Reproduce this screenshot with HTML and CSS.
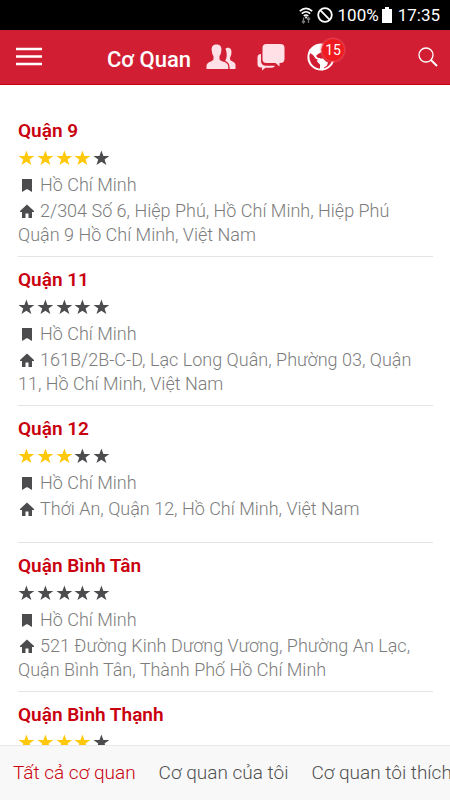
FILE: index.html
```html
<!DOCTYPE html>
<html lang="vi">
<head>
<meta charset="utf-8">
<meta name="viewport" content="width=device-width, initial-scale=1">
<title>Cơ Quan</title>
<link rel="stylesheet" href="styles.css">
</head>
<body>
<svg class="sprite" aria-hidden="true">
  <symbol id="star" viewBox="0 0 19 18"><path d="M9.500 1.500L11.500 7H17.500L12.700 10.500L14.500 16.200L9.500 12.700L4.500 16.200L6.300 10.500L1.500 7H7.500Z"/></symbol>
  <symbol id="bookmark" viewBox="0 0 18 18"><path d="M4 3h10v13l-5-3-5 3z"/></symbol>
  <symbol id="home" viewBox="0 0 18 18"><path d="M9 2.500L16 9v1h-2v6h-3.500v-4.500h-3V16H4v-6H2V9z"/></symbol>
</svg>
<div class="status">
  <svg class="wifi" viewBox="0 0 14 18" aria-hidden="true"><g fill="none" stroke="#fff" stroke-width="1.600"><path d="M.8 5.200Q7-.6 13.200 5.200M2.800 7.700Q7 3.800 11.200 7.700M4.800 10Q7 8 9.200 10"/></g><path d="M7 13L5.500 10.500h3z" fill="#fff"/><path d="M4.500 11.500v5M3 15l1.500 2L6 15M9.500 17v-5M8 13.500l1.500-2 1.500 2" fill="none" stroke="#777" stroke-width="1.300"/></svg>
  <svg class="block" viewBox="0 0 16 16" aria-hidden="true"><g fill="none" stroke="#fff" stroke-width="1.800"><circle cx="8" cy="8" r="6.800"/><path d="M3.200 3.200l9.600 9.600"/></g></svg>
  <span class="percent">100%</span>
  <svg class="battery" viewBox="0 0 10 16" aria-hidden="true"><path d="M3 0h4v2h3v14H0V2h3z" fill="#fff"/></svg>
  <span>17:35</span>
</div>
<header class="bar">
  <button class="icon-button menu" aria-label="Menu"><svg viewBox="0 0 26 20"><path d="M0 2h26M0 9.500h26M0 17h26" stroke="#fff" stroke-width="2.500"/></svg></button>
  <h1>Cơ Quan</h1>
  <button class="icon-button people" aria-label="Bạn bè"><svg viewBox="0 0 30 26" fill="#ffe0e6"><path d="M19.500 4.800C20.300 4 21 3.800 21.800 3.800c3 0 4 2.300 3.600 5.500-.1 1.700-.6 3-1.300 4v2c0 2 4.900 2 5.400 5.500V25h-5.800c0-5-1.500-6.500-4.500-8.200 2-2.800 2-8 .3-12z"/><path d="M10.500.5c4 0 5.400 2.700 4.800 6.300-.2 2.300-.7 4-1.800 5.200v3c0 2.800 8 2.200 8.700 6.800V25H.5v-3.200c.5-4.600 7-4 7-6.800v-3C6.400 10.800 6 9.100 5.800 6.800 5.200 3.200 6.500.5 10.500.5z"/></svg></button>
  <button class="icon-button chat" aria-label="Tin nhắn"><svg viewBox="0 0 28 28"><path fill="#ffe0e6" d="M4 11v7c0 3 2 4.700 5 4.700h9c-.8 1.500-2 2-4 2H8.500L5 27.500v-3H4c-2.500 0-3.500-1.500-3.500-3.500v-6.500C.5 12.500 1.500 11 4 11z"/><path fill="#ffe0e6" stroke="#d11e33" stroke-width="1.400" paint-order="stroke" d="M9.500 1h14c2.800 0 4 1.400 4 4v11c0 2.800-1.500 4-4 4h-1v3.500L18.500 20h-9c-2.800 0-4-1.300-4-4V5c0-2.600 1.200-4 4-4z"/></svg></button>
  <button class="icon-button globe" aria-label="Thông báo, 15 mới"><svg viewBox="0 0 28 28"><circle cx="14" cy="14" r="12.600" fill="none" stroke="#fff" stroke-width="2"/><path d="M5 5l6-3 7 0-1 3-3 1 1 3-4 2-2 2 2 2 2 0 0 2-4-1-3-4-3-2-1-3zM11 15.500l5 0 3 3 2 1-1 3-3 2-1 3-3-1 0-5-3-3zM17 8l6-2 3 5-1 4-3-1-2-2-3-1z" fill="#fff"/></svg><span class="badge">15</span></button>
  <button class="icon-button search" aria-label="Tìm kiếm"><svg viewBox="0 0 20 20" fill="none" stroke="#fff"><circle cx="8" cy="8" r="7" stroke-width="1.300"/><path d="M13 13l6 6" stroke-width="2"/></svg></button>
</header>
<main class="list">
  <article class="item">
    <h2>Quận 9</h2>
    <div class="stars" role="img" aria-label="4 trên 5 sao"><svg class="on"><use href="#star"/></svg><svg class="on"><use href="#star"/></svg><svg class="on"><use href="#star"/></svg><svg class="on"><use href="#star"/></svg><svg><use href="#star"/></svg></div>
    <p class="city"><svg class="glyph"><use href="#bookmark"/></svg>Hồ Chí Minh</p>
    <p class="address"><svg class="glyph"><use href="#home"/></svg>2/304 Số 6, Hiệp Phú, Hồ Chí Minh, Hiệp Phú Quận 9 Hồ Chí Minh, Việt Nam</p>
  </article>
  <article class="item">
    <h2>Quận 11</h2>
    <div class="stars" role="img" aria-label="0 trên 5 sao"><svg><use href="#star"/></svg><svg><use href="#star"/></svg><svg><use href="#star"/></svg><svg><use href="#star"/></svg><svg><use href="#star"/></svg></div>
    <p class="city"><svg class="glyph"><use href="#bookmark"/></svg>Hồ Chí Minh</p>
    <p class="address"><svg class="glyph"><use href="#home"/></svg>161B/2B-C-D, Lạc Long Quân, Phường 03, Quận 11, Hồ Chí Minh, Việt Nam</p>
  </article>
  <article class="item">
    <h2>Quận 12</h2>
    <div class="stars" role="img" aria-label="3 trên 5 sao"><svg class="on"><use href="#star"/></svg><svg class="on"><use href="#star"/></svg><svg class="on"><use href="#star"/></svg><svg><use href="#star"/></svg><svg><use href="#star"/></svg></div>
    <p class="city"><svg class="glyph"><use href="#bookmark"/></svg>Hồ Chí Minh</p>
    <p class="address"><svg class="glyph"><use href="#home"/></svg>Thới An, Quận 12, Hồ Chí Minh, Việt Nam</p>
  </article>
  <article class="item">
    <h2>Quận Bình Tân</h2>
    <div class="stars" role="img" aria-label="0 trên 5 sao"><svg><use href="#star"/></svg><svg><use href="#star"/></svg><svg><use href="#star"/></svg><svg><use href="#star"/></svg><svg><use href="#star"/></svg></div>
    <p class="city"><svg class="glyph"><use href="#bookmark"/></svg>Hồ Chí Minh</p>
    <p class="address"><svg class="glyph"><use href="#home"/></svg>521 Đường Kinh Dương Vương, Phường An Lạc, Quận Bình Tân, Thành Phố Hồ Chí Minh</p>
  </article>
  <article class="item">
    <h2>Quận Bình Thạnh</h2>
    <div class="stars" role="img" aria-label="4 trên 5 sao"><svg class="on"><use href="#star"/></svg><svg class="on"><use href="#star"/></svg><svg class="on"><use href="#star"/></svg><svg class="on"><use href="#star"/></svg><svg><use href="#star"/></svg></div>
  </article>
</main>
<nav class="tabs">
  <a href="#all" class="active">Tất cả cơ quan</a>
  <a href="#mine">Cơ quan của tôi</a>
  <a href="#liked">Cơ quan tôi thích</a>
</nav>
</body>
</html>
```

FILE: styles.css
```css
* { box-sizing: border-box; }
body {
  margin: 0;
  height: 100vh;
  display: flex;
  flex-direction: column;
  overflow: hidden;
  background: #fff;
  color: #7c7c7c;
  font: 300 18px/24px Roboto, sans-serif;
}
h1, h2, p { margin: 0; }
svg { display: block; }
.sprite { position: absolute; width: 0; height: 0; }

.status {
  flex: none;
  display: flex;
  align-items: center;
  justify-content: flex-end;
  height: 30px;
  padding-right: 10px;
  background: #000;
  color: #fff;
  font-size: 17px;
  font-weight: 400;
}
.wifi { width: 14px; height: 18px; margin-right: 4px; }
.block { width: 16px; height: 16px; margin-right: 5px; }
.percent { margin-right: 3px; }
.battery { width: 10px; height: 16px; margin-right: 6px; }

.bar {
  flex: none;
  display: flex;
  align-items: center;
  height: 55px;
  padding: 0 12px 0 16px;
  background: #d11e33;
  border-bottom: 1px solid #c80010;
  color: #fff;
}
.bar h1 {
  margin-left: 65px;
  padding-top: 6px;
  font-size: 22px;
  font-weight: 500;
  line-height: 28px;
}
.icon-button {
  position: relative;
  flex: none;
  padding: 0;
  border: 0;
  background: none;
  color: #fff;
  font-family: inherit;
}
.icon-button svg { width: 100%; height: 100%; }
.menu { width: 26px; height: 20px; }
.people { width: 30px; height: 26px; margin-left: 15px; }
.chat { width: 28px; height: 28px; margin-left: 21px; }
.globe { width: 28px; height: 28px; margin-left: 22px; }
.search { width: 20px; height: 20px; margin-left: auto; }
.badge {
  position: absolute;
  top: -4px;
  right: -9px;
  width: 22px;
  height: 22px;
  border-radius: 50%;
  background: #ee1c20;
  box-shadow: 0 0 2px 1px #ec4a55;
  font-size: 14px;
  line-height: 22px;
  text-align: center;
}

.list { flex: 1; min-height: 0; overflow: hidden; padding: 23px 17px 0 18px; }
.item {
  min-height: 137px;
  padding: 10px 0 9px;
  border-bottom: 1px solid #e1e5e4;
}
.item h2 {
  color: #c9000e;
  font-size: 19px;
  font-weight: 600;
  line-height: 26px;
}
.stars {
  display: flex;
  align-items: center;
  justify-content: space-between;
  width: 94px;
  height: 28px;
  margin-left: -1px;
}
.stars svg { width: 19px; height: 18px; fill: #4c4c4e; }
.stars .on { fill: #ffc80a; }
.city { line-height: 26px; margin-bottom: 1px; }
.glyph {
  display: inline-block;
  width: 18px;
  height: 18px;
  margin-right: 4px;
  vertical-align: -3px;
  fill: #4c4c4e;
}

.tabs {
  flex: none;
  display: flex;
  align-items: center;
  gap: 23px;
  height: 55px;
  padding-left: 13px;
  border-top: 1px solid #e8e8e8;
  background: #f8f8f8;
  font-size: 19px;
  white-space: nowrap;
  overflow: hidden;
}
.tabs a { flex: none; color: #505050; text-decoration: none; }
.tabs .active { color: #c9000e; }
```
